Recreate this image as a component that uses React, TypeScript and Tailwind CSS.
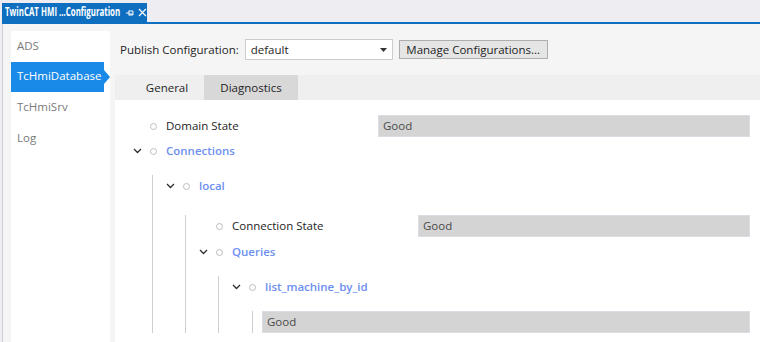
import React from "react";

const font = { fontFamily: '"Open Sans", "Noto Sans", sans-serif' };

function Chevron() {
  return (
    <span className="flex w-[16px] justify-center">
      <svg width="9" height="6" viewBox="0 0 9 6">
        <path d="M1 1 L4.5 4.5 L8 1" fill="none" stroke="#2d2d2d" strokeWidth="1.3" />
      </svg>
    </span>
  );
}

function Dot() {
  return (
    <span className="ml-[4px] flex w-[8px] justify-center">
      <span className="block h-[7px] w-[7px] rounded-full border border-[#bdbdbd]" />
    </span>
  );
}

function NodeRow({ label, mt }: { label: string; mt: string }) {
  return (
    <div className={`flex h-[22px] items-center ${mt}`}>
      <Chevron />
      <Dot />
      <span className="ml-[9px] text-[11.5px] font-semibold text-[#6d8ff0]">{label}</span>
    </div>
  );
}

function ValueRow({ label, labelW, mt }: { label: string; labelW: string; mt: string }) {
  return (
    <div className={`flex h-[22px] items-center ${mt}`}>
      <span className="w-[16px]" />
      <Dot />
      <span className={`ml-[9px] text-[11.5px] text-[#1e1e1e] ${labelW}`}>{label}</span>
      <Field />
    </div>
  );
}

function Field() {
  return (
    <div className="flex h-[22px] flex-1 items-center border border-[#dcdce4] bg-[#d4d4d4] pl-[4px] text-[11.5px] text-[#4a4a4a]">
      Good
    </div>
  );
}

export default function App() {
  const nav = ["ADS", "TcHmiDatabase", "TcHmiSrv", "Log"];

  return (
    <div className="flex h-[342px] w-[760px] flex-col overflow-hidden bg-[#eeeef2] text-[11.5px]" style={font}>
      {/* Document tab */}
      <div className="flex h-[22px] items-end pl-[2px]">
        <div className="flex h-[19px] w-[145px] items-center bg-[#0e6fc0] pl-[3px] text-white">
          <div className="w-[118px] overflow-hidden whitespace-nowrap">
            <span className="inline-block origin-left scale-x-[0.63] text-[12.5px] font-bold">
              TwinCAT HMI ...Configuration
            </span>
          </div>
          <svg className="ml-[3px]" width="10" height="10" viewBox="0 0 10 10">
            <path d="M1 5 H4 M4 2.5 V7.5 M4 3 H8 V7 H4 M4 6 H8" fill="none" stroke="#fff" strokeWidth="1" />
          </svg>
          <svg className="ml-[3px]" width="9" height="9" viewBox="0 0 9 9">
            <path d="M1 1 L8 8 M8 1 L1 8" stroke="#fff" strokeWidth="1.2" />
          </svg>
        </div>
      </div>
      <div className="ml-[2px] h-[2px] bg-[#0e6fc0]" />

      {/* Body */}
      <div className="ml-[2px] flex flex-1 border-l border-[#cccedb] bg-[#f5f5f5] pl-[8px] pt-[7px]">
        {/* Side nav */}
        <div className="w-[99px] bg-white">
          {nav.map((item) =>
            item === "TcHmiDatabase" ? (
              <div key={item} className="relative flex h-[30px] w-[93px] items-center bg-[#1a8ae8] pl-[6px] pb-[2px] text-white">
                {item}
                <span className="absolute right-[-6px] top-[8px] h-0 w-0 border-y-[7px] border-l-[6px] border-y-transparent border-l-[#1a8ae8]" />
              </div>
            ) : (
              <div key={item} className="flex h-[31px] items-center pl-[6px] pb-[2px] text-[#7a7a7a]">
                {item}
              </div>
            )
          )}
        </div>

        {/* Main */}
        <div className="ml-[5px] flex flex-1 flex-col">
          <div className="flex h-[44px] items-center pl-[5px] pb-[7px]">
            <span className="text-[#1e1e1e]">Publish Configuration:</span>
            <div className="ml-[6px] flex h-[21px] w-[148px] items-center justify-between border border-[#cccccc] bg-white pl-[5px] pr-[5px] text-[#1e1e1e]">
              <span>default</span>
              <svg width="7" height="4" viewBox="0 0 7 4">
                <path d="M0 0 H7 L3.5 4 Z" fill="#333" />
              </svg>
            </div>
            <button className="ml-[6px] h-[19px] w-[149px] border border-[#adadad] bg-[#e5e5e5] leading-none text-[#1e1e1e]">
              Manage Configurations...
            </button>
          </div>

          {/* Tabs */}
          <div className="flex h-[25px] bg-[#efefef] pl-[15px] text-[#1e1e1e]">
            <div className="flex w-[74px] items-center justify-center">General</div>
            <div className="flex w-[94px] items-center justify-center bg-[#d8d8d8]">Diagnostics</div>
          </div>

          {/* Tree */}
          <div className="flex-1 bg-white">
            <div className="h-[233px] overflow-hidden pl-[14px] pr-[10px] pt-[15px]">
              <ValueRow label="Domain State" labelW="w-[212px]" mt="" />
              <NodeRow label="Connections" mt="mt-[3px]" />
              <div className="ml-[23px] border-l border-[#cfcfcf] pl-[9px] pb-[40px]">
                <NodeRow label="local" mt="mt-[13px]" />
                <div className="ml-[23px] mt-[3px] border-l border-[#cfcfcf] pl-[9px] pb-[40px]">
                  <ValueRow label="Connection State" labelW="w-[186px]" mt="mt-[18px]" />
                  <NodeRow label="Queries" mt="mt-[4px]" />
                  <div className="ml-[23px] mt-[1px] border-l border-[#cfcfcf] pl-[9px] pb-[40px]">
                    <NodeRow label="list_machine_by_id" mt="mt-[13px]" />
                    <div className="ml-[24px] mt-[2px] border-l border-[#cfcfcf] pl-[9px] pb-[40px]">
                      <div className="mt-[13px] flex">
                        <Field />
                      </div>
                    </div>
                  </div>
                </div>
              </div>
            </div>
          </div>
        </div>
      </div>
    </div>
  );
}
